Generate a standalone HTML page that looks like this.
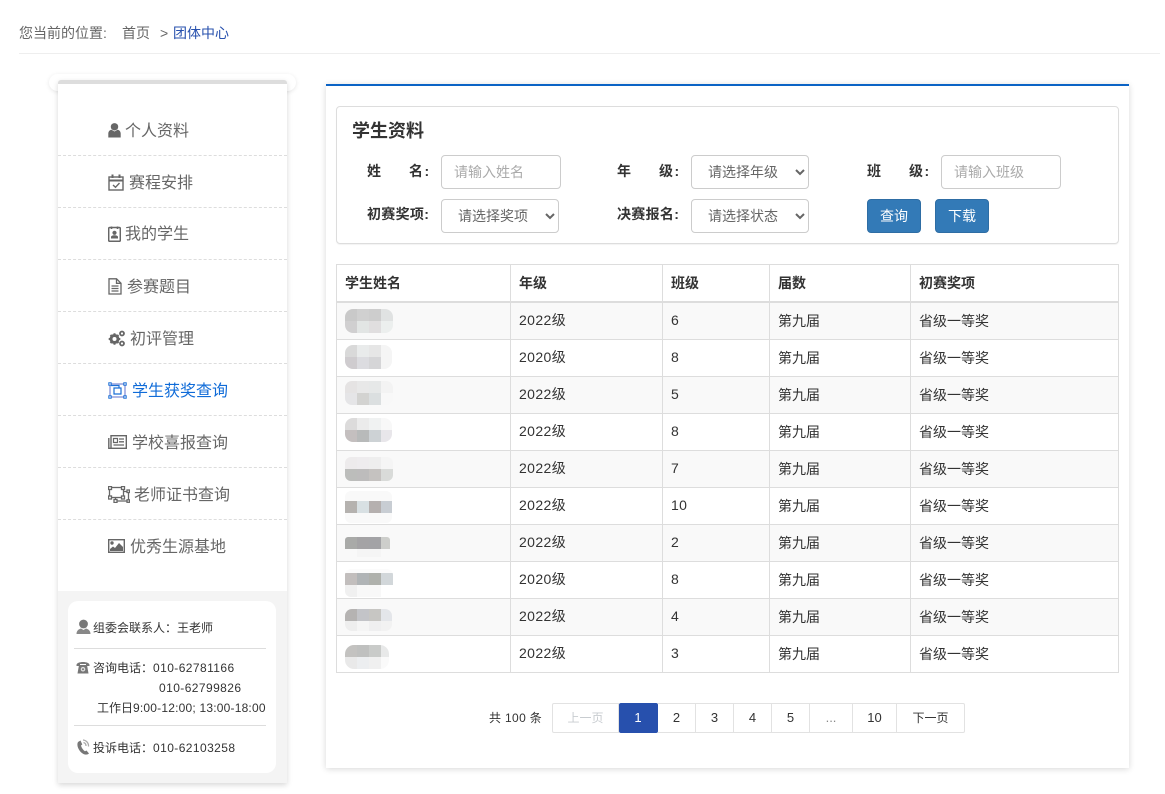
<!DOCTYPE html>
<html lang="zh-CN"><head><meta charset="utf-8"><title>学生资料</title>
<style>
*{box-sizing:border-box}
html,body{margin:0;padding:0;width:1165px;height:794px;overflow:hidden;background:#fff;font-family:"Liberation Sans","Noto Sans CJK SC",sans-serif;color:#333}
.a,.t,svg{position:absolute}
.t{white-space:nowrap;line-height:20px}
.m{font-size:16px;color:#666}
.dash{position:absolute;left:58px;width:229px;border-top:1px dashed #ddd}
.l{font-size:14px;font-weight:bold;color:#333}
.c{font-size:12px;color:#333}
.c span{letter-spacing:.42px}
input,select{position:absolute;height:34px;font:14px "Liberation Sans","Noto Sans CJK SC",sans-serif;color:#666;background:#fff;border:1px solid #ccc;border-radius:4px;outline:0}
input{width:120px;padding:0 12px}
input::placeholder{color:#aaa;opacity:1}
select{padding-left:12px}
.btn{position:absolute;top:199px;width:54px;height:34px;background:#337ab7;border:1px solid #2e6da4;border-radius:4px;color:#fff;font-size:14px;line-height:33px;text-align:center}
table{position:absolute;left:336px;top:264px;width:782px;border-collapse:collapse;table-layout:fixed;font-size:14px;color:#333}
th,td{border:1px solid #ddd;padding:0 8px;text-align:left;height:37px}
td{padding-bottom:2px}
td:nth-child(4),td:nth-child(5){padding-bottom:0}
td:nth-child(2),td:nth-child(3){letter-spacing:.4px}
th{height:37px;border-bottom:2px solid #ddd;font-weight:bold}
tbody tr:first-child td{height:38px;padding-top:1px}
tbody tr:nth-child(odd){background:#f9f9f9}
.p{position:absolute;top:703px;height:30px;border:1px solid #e2e2e2;border-left:0;font-size:13px;line-height:28px;text-align:center;color:#333}
.p.z{font-size:12px}
</style></head><body>

<div class="t" style="left:19px;top:23px;font-size:14px;color:#666">您当前的位置:</div>
<div class="t" style="left:122px;top:23px;font-size:14px;color:#666">首页</div>
<div class="t" style="left:160px;top:23px;font-size:14px;color:#666">&gt;</div>
<div class="t" style="left:173px;top:23px;font-size:14px;color:#2750ad">团体中心</div>
<div class="a" style="left:19px;top:53px;width:1141px;height:1px;background:#eee"></div>

<div class="a" style="left:49px;top:74px;width:247px;height:17px;background:#fff;border-radius:9px;box-shadow:0 1px 4px rgba(0,0,0,.1)"></div>
<div class="a" style="left:58px;top:80px;width:229px;height:703px;background:#fff;border-top:4px solid #ddd;border-radius:3px 3px 0 0;box-shadow:0 2px 6px rgba(0,0,0,.16)"></div>
<div class="a" style="left:58px;top:591px;width:229px;height:192px;background:#f4f4f4"></div>
<div class="a" style="left:68px;top:601px;width:208px;height:172px;background:#fff;border-radius:10px"></div>

<div class="dash" style="top:155px"></div><div class="dash" style="top:207px"></div><div class="dash" style="top:259px"></div><div class="dash" style="top:311px"></div><div class="dash" style="top:363px"></div><div class="dash" style="top:415px"></div><div class="dash" style="top:467px"></div><div class="dash" style="top:519px"></div>

<svg style="left:108px;top:123px" width="13" height="15" viewBox="0 0 13 15"><circle cx="6.5" cy="3.8" r="3.7" fill="#666"/><path d="M0.3 14.500V10.500C0.300 8 2.500 6.800 3.500 6.800L6.500 8.500L9.500 6.800C10.500 6.800 12.700 8 12.700 10.500V14.500Z" fill="#666"/></svg>
<div class="t m" style="left:125px;top:122px">个人资料</div>

<svg style="left:108px;top:174px" width="16" height="17" viewBox="0 0 16 17" fill="none" stroke="#666"><rect x="1" y="3" width="14" height="13" stroke-width="1.400"/><path d="M1 6.500H15" stroke-width="2"/><path d="M4.500 .5V4M11.500 .5V4" stroke-width="2"/><path d="M5 11L7.500 13.300L11.500 9" stroke-width="1.400"/></svg>
<div class="t m" style="left:129px;top:174px">赛程安排</div>

<svg style="left:108px;top:226px" width="13" height="16" viewBox="0 0 13 16" fill="none"><rect x=".7" y="1.500" width="11.600" height="13.800" rx="1" stroke="#666" stroke-width="1.500"/><path d="M3.500 .5V3M9.500 .5V3" stroke="#666" stroke-width="1.600"/><circle cx="6.500" cy="6.800" r="2.100" fill="#666"/><path d="M3 12.500V11C3 9.800 4.500 9.200 6.500 9.200S10 9.800 10 11V12.500Z" fill="#666"/></svg>
<div class="t m" style="left:125px;top:225px">我的学生</div>

<svg style="left:108px;top:278px" width="14" height="17" viewBox="0 0 14 17" fill="none" stroke="#666" stroke-width="1.300"><path d="M1 .8H8.500L13 5.300V16H1Z"/><path d="M8.500 .8V5.300H13"/><path d="M3.500 8H10.500M3.500 10.500H10.500M3.500 13H10.500"/></svg>
<div class="t m" style="left:127px;top:278px">参赛题目</div>

<svg style="left:108px;top:330px" width="18" height="17" viewBox="0 0 18 17" fill="none" stroke="#666"><circle cx="6.500" cy="9" r="3.600" stroke-width="2.800"/><path d="M6.500 3.200V14.800M.7 9H12.300M2.500 5L10.500 13M10.500 5L2.500 13" stroke-width="2"/><circle cx="6.500" cy="9" r="2" fill="#fff" stroke="none"/><circle cx="14" cy="3.500" r="2" stroke-width="1.800"/><circle cx="14" cy="13.500" r="2" stroke-width="1.800"/></svg>
<div class="t m" style="left:130px;top:330px">初评管理</div>

<svg style="left:108px;top:382px" width="19" height="17" viewBox="0 0 19 17" fill="none" stroke="#1a6fd6"><rect x="2" y="2" width="15" height="13" stroke-width="1.100" stroke="#6f7fd0"/><path d="M3 3.500H11V6M6 6H13V12H6Z" stroke-width="1.200"/><rect x=".8" y=".8" width="2.400" height="2.400" fill="#fff"/><rect x="15.800" y=".8" width="2.400" height="2.400" fill="#fff"/><rect x=".8" y="13.800" width="2.400" height="2.400" fill="#fff"/><rect x="15.800" y="13.800" width="2.400" height="2.400" fill="#fff"/></svg>
<div class="t m" style="left:132px;top:382px;color:#0f6bd8">学生获奖查询</div>

<svg style="left:108px;top:435px" width="19" height="14" viewBox="0 0 19 14" fill="none" stroke="#666"><rect x="3" y=".7" width="15.300" height="12.600" stroke-width="1.400"/><path d="M.8 3V13.300H3" stroke-width="1.400"/><path d="M5.500 3.500H9.500V7.500H5.500Z" stroke-width="1.200"/><path d="M11 4H16M11 6.800H16M5.500 10H16" stroke-width="1.300"/></svg>
<div class="t m" style="left:132px;top:434px">学校喜报查询</div>

<svg style="left:108px;top:486px" width="22" height="17" viewBox="0 0 22 17" fill="none" stroke="#666" stroke-width="1.300"><rect x="1.500" y="1.500" width="14" height="10"/><path d="M15.500 5.500H20.500V15H7.500V11.500"/><g fill="#fff"><rect x=".5" y=".5" width="3" height="3"/><rect x="13.500" y=".5" width="3" height="3"/><rect x=".5" y="10" width="3" height="3"/><rect x="13.500" y="10" width="3" height="3"/><rect x="19" y="4" width="2.500" height="2.500"/><rect x="19" y="13.800" width="2.500" height="2.500"/><rect x="6" y="13.500" width="3" height="3"/></g></svg>
<div class="t m" style="left:134px;top:486px">老师证书查询</div>

<svg style="left:108px;top:539px" width="17" height="14" viewBox="0 0 17 14"><rect x=".7" y=".7" width="15.600" height="12.600" fill="none" stroke="#666" stroke-width="1.400"/><circle cx="4" cy="4" r="1.700" fill="#666"/><path d="M2 12V10L5 7.500L7 9L11 4L15 8V12Z" fill="#666"/></svg>
<div class="t m" style="left:130px;top:538px">优秀生源基地</div>

<svg style="left:76px;top:619px" width="15" height="16" viewBox="0 0 15 16"><circle cx="7.500" cy="5" r="4.400" fill="#777"/><path d="M.5 15C.5 11.500 3 10 5 9.500L7.500 11L10 9.500C12 10 14.500 11.500 14.500 15Z" fill="#888"/></svg>
<div class="t c" style="left:93px;top:618px">组委会联系人：王老师</div>
<div class="a" style="left:74px;top:648px;width:192px;height:1px;background:#ddd"></div>
<svg style="left:76px;top:660px" width="14" height="14" viewBox="0 0 14 14"><path d="M.5 5C.5 1 13.500 1 13.500 5V6H10V4H4V6H.5Z" fill="#777"/><path d="M3 5H11L12.500 13.500H1.500Z" fill="#777"/><circle cx="7" cy="9.200" r="2.300" fill="#ddd"/><circle cx="7" cy="9.200" r="1" fill="#777"/></svg>
<div class="t c" style="left:93px;top:658px">咨询电话：<span>010-62781166</span></div>
<div class="t c" style="left:159px;top:678px"><span>010-62799826</span></div>
<div class="t c" style="left:97px;top:698px">工作日<span style="letter-spacing:.2px">9:00-12:00; 13:00-18:00</span></div>
<div class="a" style="left:74px;top:725px;width:192px;height:1px;background:#ddd"></div>
<svg style="left:76px;top:739px" width="14" height="16" viewBox="0 0 14 16"><path d="M2 3C.2 6 2.500 12 7 14.800C9 16 11.500 15.800 13 14.500L10.500 11.500L9 12.300C7 11 5.500 8.500 5 6.500L6.300 5.500L4.500 1.500Z" fill="#777"/><path d="M7 1A6 6 0 0 1 12.500 7.500M7.500 3.500A3.500 3.500 0 0 1 10 7" fill="none" stroke="#aaa" stroke-width="1.300"/></svg>
<div class="t c" style="left:93px;top:738px">投诉电话：<span>010-62103258</span></div>

<div class="a" style="left:326px;top:84px;width:803px;height:684px;background:#fff;border-top:2px solid #0b63c5;box-shadow:0 1px 6px rgba(0,0,0,.16)"></div>
<div class="a" style="left:336px;top:106px;width:783px;height:138px;border:1px solid #ddd;border-radius:4px;box-shadow:0 1px 1px rgba(0,0,0,.05)"></div>
<div class="t" style="left:352px;top:121px;font-size:18px;font-weight:bold;color:#333">学生资料</div>

<div class="t l" style="left:367px;top:161px">姓</div><div class="t l" style="left:409px;top:161px;letter-spacing:1.500px">名:</div>
<input style="left:441px;top:155px" placeholder="请输入姓名">
<div class="t l" style="left:617px;top:161px">年</div><div class="t l" style="left:659px;top:161px;letter-spacing:1.500px">级:</div>
<select style="left:691px;top:155px;width:118px"><option>请选择年级</option></select>
<div class="t l" style="left:867px;top:161px">班</div><div class="t l" style="left:909px;top:161px;letter-spacing:1.500px">级:</div>
<input style="left:941px;top:155px" placeholder="请输入班级">
<div class="t l" style="left:367px;top:204px;letter-spacing:.3px">初赛奖项:</div>
<select style="left:441px;top:199px;width:118px"><option>请选择奖项</option></select>
<div class="t l" style="left:617px;top:204px;letter-spacing:.3px">决赛报名:</div>
<select style="left:691px;top:199px;width:118px"><option>请选择状态</option></select>
<div class="btn" style="left:867px">查询</div>
<div class="btn" style="left:935px">下载</div>

<table>
<colgroup><col style="width:174px"><col style="width:152px"><col style="width:107px"><col style="width:141px"><col style="width:208px"></colgroup>
<thead><tr><th>学生姓名</th><th>年级</th><th>班级</th><th>届数</th><th>初赛奖项</th></tr></thead>
<tbody>
<tr><td></td><td>2022级</td><td>6</td><td>第九届</td><td>省级一等奖</td></tr>
<tr><td></td><td>2020级</td><td>8</td><td>第九届</td><td>省级一等奖</td></tr>
<tr><td></td><td>2022级</td><td>5</td><td>第九届</td><td>省级一等奖</td></tr>
<tr><td></td><td>2022级</td><td>8</td><td>第九届</td><td>省级一等奖</td></tr>
<tr><td></td><td>2022级</td><td>7</td><td>第九届</td><td>省级一等奖</td></tr>
<tr><td></td><td>2022级</td><td>10</td><td>第九届</td><td>省级一等奖</td></tr>
<tr><td></td><td>2022级</td><td>2</td><td>第九届</td><td>省级一等奖</td></tr>
<tr><td></td><td>2020级</td><td>8</td><td>第九届</td><td>省级一等奖</td></tr>
<tr><td></td><td>2022级</td><td>4</td><td>第九届</td><td>省级一等奖</td></tr>
<tr><td></td><td>2022级</td><td>3</td><td>第九届</td><td>省级一等奖</td></tr>
</tbody></table>

<svg style="left:345px;top:305px" width="50" height="368" viewBox="0 0 50 368">
<defs>
<clipPath id="c1"><rect x="0" y="4" width="48" height="24" rx="8"/></clipPath>
<clipPath id="c2"><rect x="0" y="40" width="47" height="24" rx="8"/></clipPath>
<clipPath id="c3"><rect x="0" y="76" width="48" height="24" rx="7"/></clipPath>
<clipPath id="c4"><rect x="0" y="113" width="47" height="24" rx="8"/></clipPath>
<clipPath id="c5"><rect x="0" y="152" width="48" height="24" rx="6"/></clipPath>
<clipPath id="c6"><rect x="0" y="186" width="47" height="32" rx="6"/></clipPath>
<clipPath id="c7"><rect x="0" y="232" width="45" height="20" rx="3"/></clipPath>
<clipPath id="c8"><rect x="0" y="264" width="48" height="28" rx="6"/></clipPath>
<clipPath id="c9"><rect x="0" y="304" width="47" height="22" rx="7"/></clipPath>
<clipPath id="c10"><rect x="0" y="340" width="44" height="24" rx="9"/></clipPath>
</defs>
<g clip-path="url(#c1)"><path fill="#c9c9c9" d="M0 4h12v12H0z"/><path fill="#d0d0d0" d="M12 4h12v12H12z"/><path fill="#cdcdcd" d="M24 4h12v12H24z"/><path fill="#e0e2e2" d="M36 4h12v12H36z"/><path fill="#d0cfd0" d="M0 16h12v12H0z"/><path fill="#e2e5e4" d="M12 16h12v12H12z"/><path fill="#e0dedf" d="M24 16h12v12H24z"/><path fill="#ecefee" d="M36 16h12v12H36z"/></g>
<g clip-path="url(#c2)"><path fill="#d9d9d9" d="M0 40h12v12H0z"/><path fill="#e9ebeb" d="M12 40h12v12H12z"/><path fill="#e6e6e6" d="M24 40h12v12H24z"/><path fill="#f5f5f5" d="M36 40h12v12H36z"/><path fill="#cfcccf" d="M0 52h12v12H0z"/><path fill="#dcdce0" d="M12 52h12v12H12z"/><path fill="#d5d5d7" d="M24 52h12v12H24z"/><path fill="#f5f5f5" d="M36 52h12v12H36z"/></g>
<g clip-path="url(#c3)"><path fill="#e5e3e3" d="M0 76h12v12H0z"/><path fill="#e8e8e8" d="M12 76h12v12H12z"/><path fill="#e6e8e8" d="M24 76h12v12H24z"/><path fill="#f3f3f3" d="M36 76h12v12H36z"/><path fill="#e5e5e7" d="M0 88h12v12H0z"/><path fill="#d3d3d1" d="M12 88h12v12H12z"/><path fill="#dbdfe0" d="M24 88h12v12H24z"/><path fill="#f8f8f8" d="M36 88h12v12H36z"/></g>
<g clip-path="url(#c4)"><path fill="#dcdbdb" d="M0 113h12v12H0z"/><path fill="#ebebeb" d="M12 113h12v12H12z"/><path fill="#f0f2f2" d="M24 113h12v12H24z"/><path fill="#f8f8f8" d="M36 113h12v12H36z"/><path fill="#c4bfbf" d="M0 125h12v12H0z"/><path fill="#b8baba" d="M12 125h12v12H12z"/><path fill="#cdd2d5" d="M24 125h12v12H24z"/><path fill="#e8e6ea" d="M36 125h12v12H36z"/></g>
<g clip-path="url(#c5)"><path fill="#edebec" d="M0 152h12v12H0z"/><path fill="#eeecee" d="M12 152h12v12H12z"/><path fill="#eeeeee" d="M24 152h12v12H24z"/><path fill="#f5f5f5" d="M36 152h12v12H36z"/><path fill="#bcbdbb" d="M0 164h12v12H0z"/><path fill="#bdbcbc" d="M12 164h12v12H12z"/><path fill="#c5c2c0" d="M24 164h12v12H24z"/><path fill="#d9dbd9" d="M36 164h12v12H36z"/></g>
<g clip-path="url(#c6)"><path fill="#f9f9f9" d="M0 186h48v10H0z"/><path fill="#b5b2af" d="M0 196h12v12H0z"/><path fill="#d8e0e3" d="M12 196h12v12H12z"/><path fill="#b5b0af" d="M24 196h12v12H24z"/><path fill="#c8cdd3" d="M36 196h12v12H36z"/><path fill="#f9f9f9" d="M0 208h48v10H0z"/></g>
<g clip-path="url(#c7)"><path fill="#a9aaa8" d="M0 232h12v12H0z"/><path fill="#a4a3a5" d="M12 232h12v12H12z"/><path fill="#a3a3a6" d="M24 232h12v12H24z"/><path fill="#cdcecb" d="M36 232h12v12H36z"/><path fill="#f5f5f5" d="M12 244h24v8H12z"/></g>
<g clip-path="url(#c8)"><path fill="#fbfbfb" d="M0 264h48v4H0z"/><path fill="#c2bebd" d="M0 268h12v12H0z"/><path fill="#b0b4b6" d="M12 268h12v12H12z"/><path fill="#afb1ac" d="M24 268h12v12H24z"/><path fill="#d2d7da" d="M36 268h12v12H36z"/><path fill="#f0f0f0" d="M0 280h12v12H0z"/><path fill="#f8f8f8" d="M12 280h24v12H12z"/></g>
<g clip-path="url(#c9)"><path fill="#b5b3b2" d="M0 304h12v12H0z"/><path fill="#c3c4c8" d="M12 304h12v12H12z"/><path fill="#c7c6c3" d="M24 304h12v12H24z"/><path fill="#e4e6ea" d="M36 304h12v12H36z"/><path fill="#eeeeee" d="M0 316h12v10H0z"/><path fill="#f5f5f5" d="M12 316h12v10H12z"/><path fill="#efeff0" d="M24 316h12v10H24z"/><path fill="#f2f2f2" d="M36 316h12v10H36z"/></g>
<g clip-path="url(#c10)"><path fill="#c3c2c0" d="M0 340h12v12H0z"/><path fill="#bfc0bf" d="M12 340h12v12H12z"/><path fill="#c9cbc9" d="M24 340h12v12H24z"/><path fill="#e8e9e9" d="M36 340h12v12H36z"/><path fill="#e9e9e9" d="M0 352h12v12H0z"/><path fill="#eceef0" d="M12 352h12v12H12z"/><path fill="#f0f0f0" d="M24 352h12v12H24z"/><path fill="#fafafa" d="M36 352h12v12H36z"/></g>
</svg>

<div class="t" style="left:489px;top:708px;font-size:12px;color:#333;letter-spacing:.35px">共 100 条</div>
<div class="p z" style="left:552px;width:67px;border-left:1px solid #e2e2e2;border-radius:2px 0 0 2px;color:#c8ccd0">上一页</div>
<div class="p" style="left:619px;width:39px;background:#2750ad;border-color:#2750ad;border-radius:2px;color:#fff">1</div>
<div class="p" style="left:658px;width:38px">2</div>
<div class="p" style="left:696px;width:38px">3</div>
<div class="p" style="left:734px;width:38px">4</div>
<div class="p" style="left:772px;width:38px">5</div>
<div class="p" style="left:810px;width:43px;color:#888">...</div>
<div class="p" style="left:853px;width:44px">10</div>
<div class="p z" style="left:897px;width:68px;border-radius:0 2px 2px 0">下一页</div>

</body></html>
